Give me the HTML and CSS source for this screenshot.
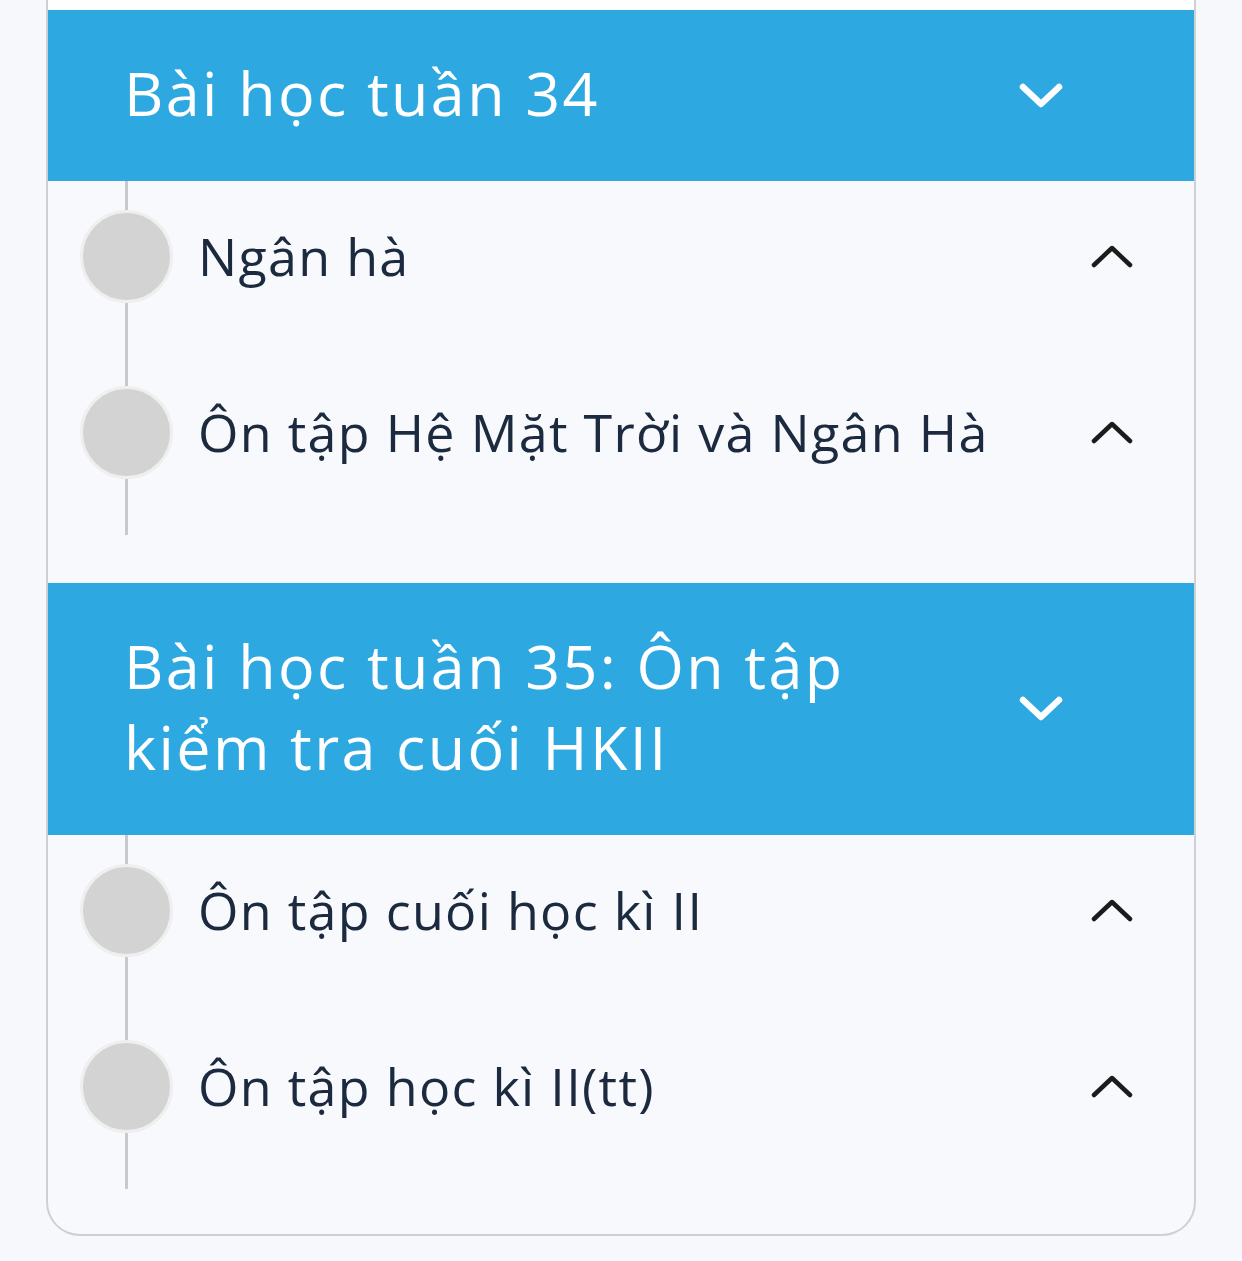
FILE: index.html
```html
<!DOCTYPE html>
<html lang="vi">
<head>
<meta charset="utf-8">
<title>Bài học</title>
<link rel="stylesheet" href="styles.css">
</head>
<body>
<div class="card">
  <div class="card-top"></div>

  <section class="week">
    <div class="week-head">
      <h2 class="week-title">Bài học tuần 34</h2>
      <svg class="head-chevron" viewBox="0 0 44 26" aria-hidden="true"><path d="M4 4 L22 21 L40 4"/></svg>
    </div>
    <ul class="lessons">
      <li class="lesson">
        <span class="dot"></span>
        <span class="lesson-name">Ngân hà</span>
        <svg class="lesson-chevron" viewBox="0 0 42 24" aria-hidden="true"><path d="M3 21 L21 4 L39 21"/></svg>
      </li>
      <li class="lesson">
        <span class="dot"></span>
        <span class="lesson-name">Ôn tập Hệ Mặt Trời và Ngân Hà</span>
        <svg class="lesson-chevron" viewBox="0 0 42 24" aria-hidden="true"><path d="M3 21 L21 4 L39 21"/></svg>
      </li>
    </ul>
  </section>

  <section class="week">
    <div class="week-head">
      <h2 class="week-title">Bài học tuần 35: Ôn tập kiểm tra cuối HKII</h2>
      <svg class="head-chevron" viewBox="0 0 44 26" aria-hidden="true"><path d="M4 4 L22 21 L40 4"/></svg>
    </div>
    <ul class="lessons">
      <li class="lesson">
        <span class="dot"></span>
        <span class="lesson-name">Ôn tập cuối học kì II</span>
        <svg class="lesson-chevron" viewBox="0 0 42 24" aria-hidden="true"><path d="M3 21 L21 4 L39 21"/></svg>
      </li>
      <li class="lesson">
        <span class="dot"></span>
        <span class="lesson-name">Ôn tập học kì II(tt)</span>
        <svg class="lesson-chevron" viewBox="0 0 42 24" aria-hidden="true"><path d="M3 21 L21 4 L39 21"/></svg>
      </li>
    </ul>
  </section>
</div>
</body>
</html>
```

FILE: styles.css
```css
* {
  box-sizing: border-box;
}

html,
body {
  margin: 0;
  padding: 0;
  background: #f7f8fc;
  font-family: "Open Sans", "Noto Sans", sans-serif;
}

.card {
  margin: 0 46px;
  width: 1150px;
  background: #f8f9fd;
  border: 2px solid #cfcfd4;
  border-top: none;
  border-radius: 0 0 34px 34px;
  padding-bottom: 47px;
}

.card-top {
  height: 10px;
  background: #fefefe;
}

.week + .week {
  margin-top: 50px;
}

.week-head {
  display: flex;
  align-items: center;
  background: #2ea8e1;
  padding: 45px 131px 45px 76px;
}

.week-title {
  flex: 1;
  margin: 0;
  max-width: 820px;
  margin-right: auto;
  color: #ffffff;
  font-size: 61px;
  font-weight: 400;
  line-height: 81px;
  letter-spacing: 2.4px;
  position: relative;
  top: -3px;
}

.head-chevron {
  width: 44px;
  height: 26px;
  flex: none;
  margin-left: auto;
}

.head-chevron path {
  fill: none;
  stroke: #ffffff;
  stroke-width: 6.5;
  stroke-linecap: round;
  stroke-linejoin: round;
}

.lessons {
  position: relative;
  list-style: none;
  margin: 0;
  padding: 0 61px 0 32px;
}

/* timeline rail behind the dots */
.lessons::before {
  content: "";
  position: absolute;
  left: 77px;
  top: 0;
  bottom: -2px;
  width: 3px;
  background: #c9c9cb;
}

.lesson {
  display: flex;
  align-items: center;
  height: 176px;
  padding-bottom: 26px;
}

.dot {
  position: relative;
  flex: none;
  width: 93px;
  height: 93px;
  border-radius: 50%;
  background: #d3d3d3;
  border: 3px solid #efefef;
}

.lesson-name {
  flex: 1;
  margin-left: 25px;
  color: #1b2a3f;
  font-size: 52px;
  font-weight: 400;
  line-height: 1.2;
  letter-spacing: 1.3px;
  white-space: nowrap;
}

.lesson-chevron {
  flex: none;
  width: 42px;
  height: 24px;
}

.lesson-chevron path {
  fill: none;
  stroke: #1b1b1b;
  stroke-width: 4.5;
  stroke-linecap: round;
  stroke-linejoin: round;
}
```
